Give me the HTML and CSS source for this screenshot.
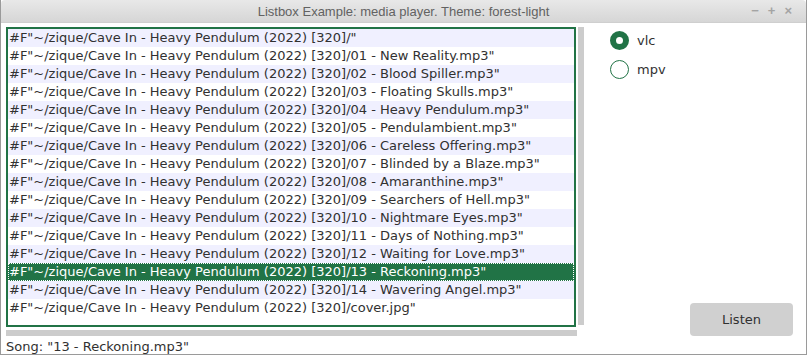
FILE: index.html
```html
<!DOCTYPE html>
<html lang="en">
<head>
    <meta charset="UTF-8">
    <title>Listbox Example: media player. Theme: forest-light</title>
    <link rel="stylesheet" href="styles.css">
</head>
<body>
    <div class="window">
        <!-- Title bar -->
        <div class="titlebar">
            <span class="title">Listbox Example: media player. Theme: forest-light</span>
            <div class="controls">
                <span>&minus;</span>
                <span>+</span>
                <span>&times;</span>
            </div>
        </div>

        <div class="content">
            <div class="left">
                <div class="list-row">
                    <div class="listbox" id="listbox"></div>
                    <div class="vscroll"></div>
                </div>
                <div class="hscroll"></div>
                <div class="song">Song: "13 - Reckoning.mp3"</div>
            </div>

            <div class="right">
                <div class="radios">
                    <label class="radio"><span class="dot checked"></span>vlc</label>
                    <label class="radio"><span class="dot"></span>mpv</label>
                </div>
                <button class="listen">Listen</button>
            </div>
        </div>
    </div>

    <script>
        const prefix = '#F"~/zique/Cave In - Heavy Pendulum (2022) [320]/';
        const files = [
            '', '01 - New Reality.mp3', '02 - Blood Spiller.mp3', '03 - Floating Skulls.mp3',
            '04 - Heavy Pendulum.mp3', '05 - Pendulambient.mp3', '06 - Careless Offering.mp3',
            '07 - Blinded by a Blaze.mp3', '08 - Amaranthine.mp3', '09 - Searchers of Hell.mp3',
            '10 - Nightmare Eyes.mp3', '11 - Days of Nothing.mp3', '12 - Waiting for Love.mp3',
            '13 - Reckoning.mp3', '14 - Wavering Angel.mp3', 'cover.jpg'
        ];
        const listbox = document.getElementById('listbox');
        files.forEach((f, i) => {
            const item = document.createElement('div');
            item.classList.add('item');
            if (i % 2 === 0) item.classList.add('alt');
            if (i === 13) item.classList.add('selected');
            item.textContent = prefix + f + '"';
            listbox.appendChild(item);
        });
    </script>
</body>
</html>
```

FILE: styles.css
```css
body {
    margin: 0;
    background-color: #ffffff;
    font-family: 'DejaVu Sans', sans-serif;
}

.window {
    width: 807px;
    height: 355px;
    box-sizing: border-box;
    border: 1px solid #9a9a9a;
    border-top: none;
    display: flex;
    flex-direction: column;
    background-color: #ffffff;
}

/* Title bar */
.titlebar {
    height: 22px;
    position: relative;
    display: flex;
    align-items: center;
    justify-content: center;
    background: linear-gradient(#e8e8e8, #d6d6d6);
    border-bottom: 1px solid #cfcfcf;
    border-radius: 4px 4px 0 0;
}

.title {
    font-family: 'Liberation Sans', sans-serif;
    font-size: 13px;
    color: #626262;
}

.controls {
    position: absolute;
    right: 14px;
    top: 3px;
    display: flex;
    gap: 9px;
    font-family: 'Liberation Sans', sans-serif;
    font-size: 13px;
    font-weight: bold;
    color: #a4a4a4;
}

.content {
    flex: 1;
    display: flex;
    padding: 4px 13px 0 5px;
}

.left {
    width: 580px;
    display: flex;
    flex-direction: column;
}

.list-row {
    display: flex;
    gap: 2px;
}

/* Listbox */
.listbox {
    width: 566px;
    height: 296px;
    border: 2px solid #217346;
    overflow: hidden;
    font-size: 13px;
    color: #313131;
}

.item {
    height: 18px;
    line-height: 18px;
    padding-left: 1px;
    white-space: nowrap;
    box-sizing: border-box;
}

.item.alt {
    background-color: #f0f0ff;
}

.item.selected {
    background-color: #217346;
    color: #ffffff;
    outline: 1px dotted #ffffff;
    outline-offset: -1px;
}

.vscroll {
    width: 6px;
    height: 298px;
    background-color: #cccccc;
}

.hscroll {
    width: 571px;
    height: 6px;
    margin-top: 3px;
    background-color: #cccccc;
}

.song {
    margin-top: 3px;
    font-size: 13px;
    color: #313131;
}

/* Right column */
.right {
    flex: 1;
    display: flex;
    flex-direction: column;
    justify-content: space-between;
    align-items: flex-end;
    padding-bottom: 18px;
}

.radios {
    align-self: flex-start;
    display: flex;
    flex-direction: column;
    gap: 10px;
    padding-left: 24px;
    padding-top: 4px;
}

.radio {
    display: flex;
    align-items: center;
    gap: 8px;
    font-size: 13px;
    color: #313131;
}

.dot {
    width: 19px;
    height: 19px;
    box-sizing: border-box;
    border: 1px solid #217346;
    border-radius: 50%;
}

.dot.checked {
    border: 6px solid #217346;
    background-color: #ffffff;
}

.listen {
    width: 103px;
    height: 33px;
    border: none;
    border-radius: 4px;
    background-color: #d0d0d0;
    font-family: 'DejaVu Sans', sans-serif;
    font-size: 13px;
    color: #313131;
}
```
